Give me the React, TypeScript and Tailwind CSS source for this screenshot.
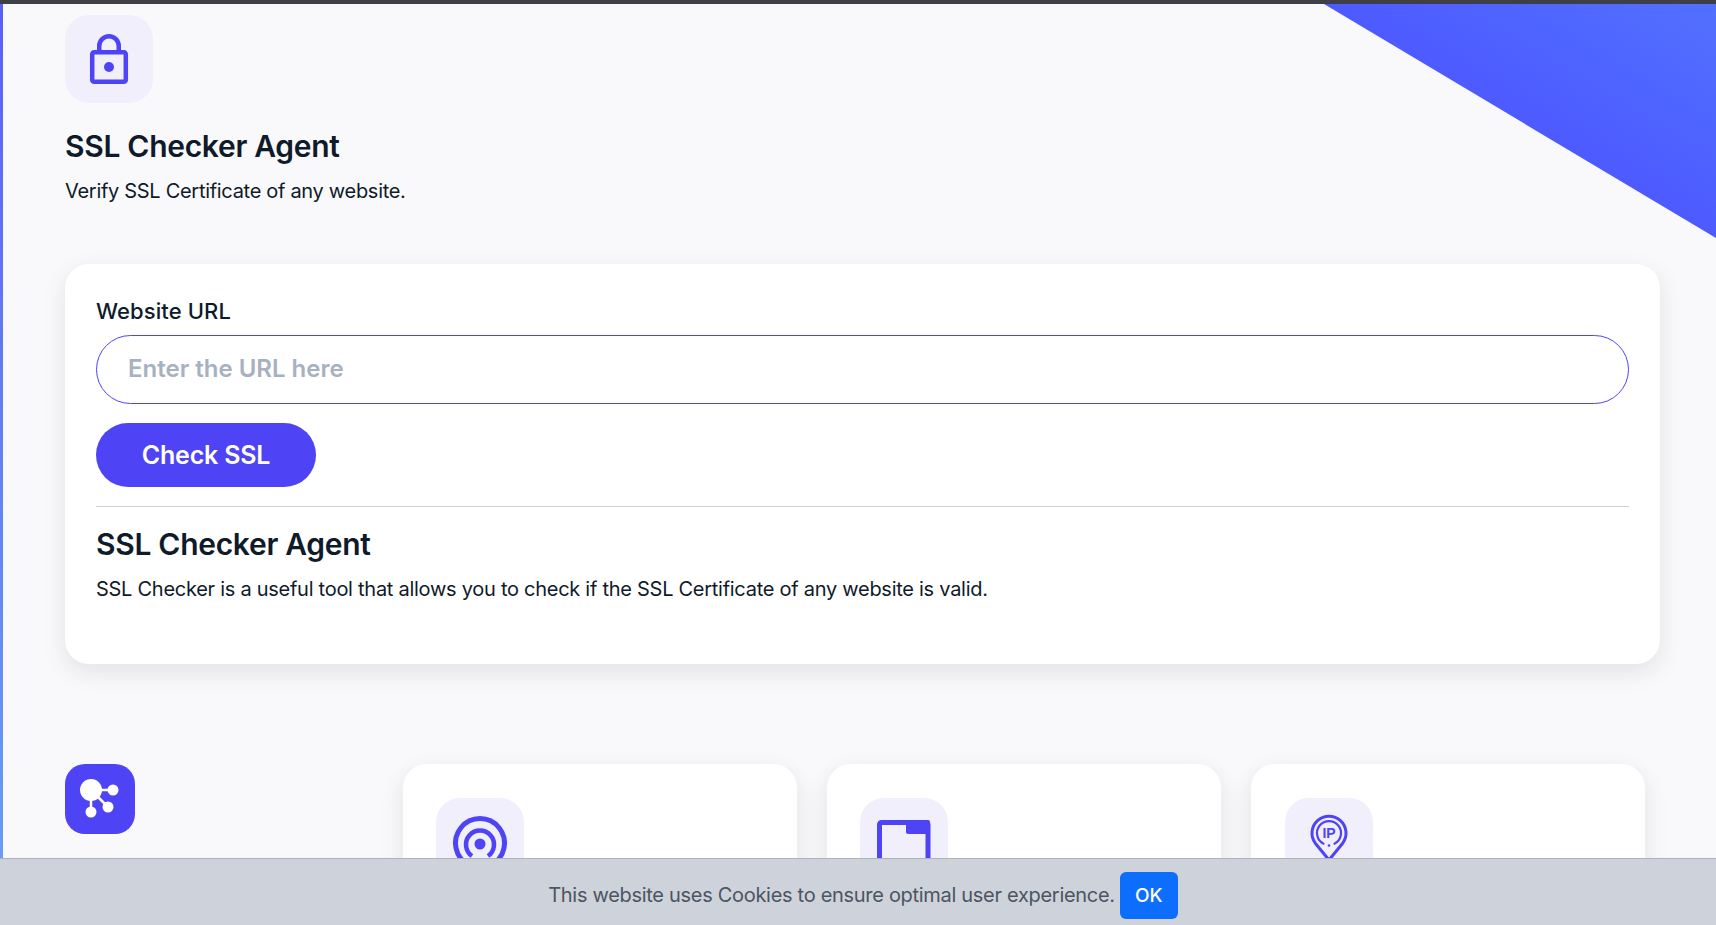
import React from 'react';

const font = { fontFamily: '"Inter", "Liberation Sans", sans-serif' };

// 图标底座
const IconBox: React.FC<{ children: React.ReactNode }> = ({ children }) => (
  <div className="w-[88px] h-[88px] rounded-[24px] bg-[#f1effc] flex items-center justify-center">
    {children}
  </div>
);

const LockIcon = () => (
  <svg width="88" height="88" viewBox="0 0 88 88" fill="none">
    <path d="M34.25 37 V31 a9.75 9.75 0 0 1 19.5 0 V37" stroke="#4e43f5" strokeWidth="4.5" />
    <rect x="27.2" y="37.2" width="33.6" height="29.6" rx="2" stroke="#4e43f5" strokeWidth="4.5" />
    <circle cx="44" cy="52" r="5" fill="#4e43f5" />
  </svg>
);

const NetworkIcon = () => (
  <svg width="70" height="70" viewBox="0 0 70 70" fill="none">
    <path d="M26 26 H48 M26 26 L43 43 M26 26 V48" stroke="#fff" strokeWidth="2.5" />
    <circle cx="26" cy="26" r="11" fill="#fff" />
    <circle cx="48" cy="26" r="5.5" fill="#fff" />
    <circle cx="43" cy="43" r="5.5" fill="#fff" />
    <circle cx="26" cy="48" r="5.5" fill="#fff" />
  </svg>
);

const RadarIcon = () => (
  <svg width="88" height="88" viewBox="0 0 88 88" fill="none">
    <path d="M33 67 A24.5 24.5 0 1 1 55 67" stroke="#4e43f5" strokeWidth="5" />
    <path d="M36 58 A14 14 0 1 1 52 58" stroke="#4e43f5" strokeWidth="4.5" />
    <circle cx="44" cy="46" r="5.5" fill="#4e43f5" />
  </svg>
);

const DocIcon = () => (
  <svg width="88" height="88" viewBox="0 0 88 88" fill="none">
    <rect x="19.5" y="24.5" width="48.5" height="60" rx="2" stroke="#4e43f5" strokeWidth="5" />
    <path d="M46 22 H68 a2 2 0 0 1 2 2 V36 H48 a2 2 0 0 1 -2 -2 Z" fill="#4e43f5" />
  </svg>
);

const PinIcon = () => (
  <svg width="88" height="88" viewBox="0 0 88 88" fill="none">
    <path d="M44 62 L30.5 45.5 A17 17 0 1 1 57.5 45.5 Z" stroke="#4e43f5" strokeWidth="3" strokeLinejoin="round" />
    <path d="M38.5 45.7 A12 12 0 1 1 49.5 45.7" stroke="#4e43f5" strokeWidth="2.2" strokeLinecap="round" />
    <circle cx="44" cy="47.5" r="1.3" fill="#4e43f5" />
    <text x="44" y="40" textAnchor="middle" fontSize="14" fontWeight="700" fill="#4e43f5" fontFamily="Liberation Sans, sans-serif">IP</text>
  </svg>
);

export default function App() {
  return (
    <div style={font} className="relative h-[925px] overflow-hidden bg-[#f9f9fb] border-t-4 border-t-[#3f3f46]">
      {/* 左侧色条 */}
      <div className="absolute left-0 top-0 bottom-0 w-[3px] bg-gradient-to-b from-[#5c5ff8] to-[#6aa0f0]" />
      {/* 右上角三角 */}
      <div className="absolute top-0 right-0 w-[392px] h-[234px] bg-gradient-to-tr from-[#4b52ff] via-[#4d5aff] to-[#5270ff] [clip-path:polygon(0_0,100%_0,100%_100%)]" />

      <div className="relative pl-[65px] pr-[56px] pt-[11px] text-[#0f1a2a]">
        <IconBox><LockIcon /></IconBox>
        <h1 className="mt-[24px] text-[30px] leading-[38px] font-semibold tracking-[-0.3px]">SSL Checker Agent</h1>
        <p className="mt-[12px] text-[20px] leading-[28px] tracking-[-0.3px]">Verify SSL Certificate of any website.</p>

        {/* 主卡片 */}
        <div className="mt-[59px] h-[400px] rounded-[24px] bg-white shadow-[0_8px_24px_rgba(30,30,60,0.1)] px-[31px] pt-[32px]">
          <label className="block text-[22px] leading-[30px] font-medium tracking-[0.1px]">Website URL</label>
          <div className="mt-[9px] h-[69px] rounded-full border border-[#4e43f5] pl-[31px] pb-[2px] flex items-center text-[24px] font-semibold text-[#a7b1c2]">
            Enter the URL here
          </div>
          <button className="mt-[19px] block w-[220px] h-[64px] rounded-full bg-[#4e43f5] pt-[2px] text-white text-[25px] font-semibold tracking-[-0.2px]">
            Check SSL
          </button>
          <div className="mt-[19px] border-t border-[#ccd2da]" />
          <h2 className="mt-[17px] text-[30px] leading-[40px] font-semibold tracking-[-0.3px]">SSL Checker Agent</h2>
          <p className="mt-[11px] text-[20px] leading-[28px] tracking-[-0.27px]">
            SSL Checker is a useful tool that allows you to check if the SSL Certificate of any website is valid.
          </p>
        </div>

        {/* 下方工具列表 */}
        <div className="mt-[100px] flex">
          <div className="w-[338px] shrink-0">
            <div className="w-[70px] h-[70px] rounded-[20px] bg-[#4e43f5]"><NetworkIcon /></div>
          </div>
          <div className="flex gap-[30px]">
            {[<RadarIcon />, <DocIcon />, <PinIcon />].map((icon, i) => (
              <div key={i} className={`w-[394px] h-[300px] rounded-[24px] bg-white shadow-[0_8px_24px_rgba(30,30,60,0.1)] pt-[34px] ${i === 2 ? 'pl-[34px]' : 'pl-[33px]'}`}>
                <IconBox>{icon}</IconBox>
              </div>
            ))}
          </div>
        </div>
      </div>

      {/* Cookie 提示条 */}
      <div className="absolute left-0 right-0 bottom-0 h-[67px] bg-[#ced2da] border-t border-[#adb2ba] flex items-center justify-center gap-[5px] pl-[10px] pt-[7px]">
        <span className="pb-[2px] text-[20px] tracking-[-0.3px] text-[#4b5563]">This website uses Cookies to ensure optimal user experience.</span>
        <button className="w-[58px] h-[47px] rounded-[6px] bg-[#0d6efd] pt-[1px] text-white text-[19px] font-medium">OK</button>
      </div>
    </div>
  );
}
